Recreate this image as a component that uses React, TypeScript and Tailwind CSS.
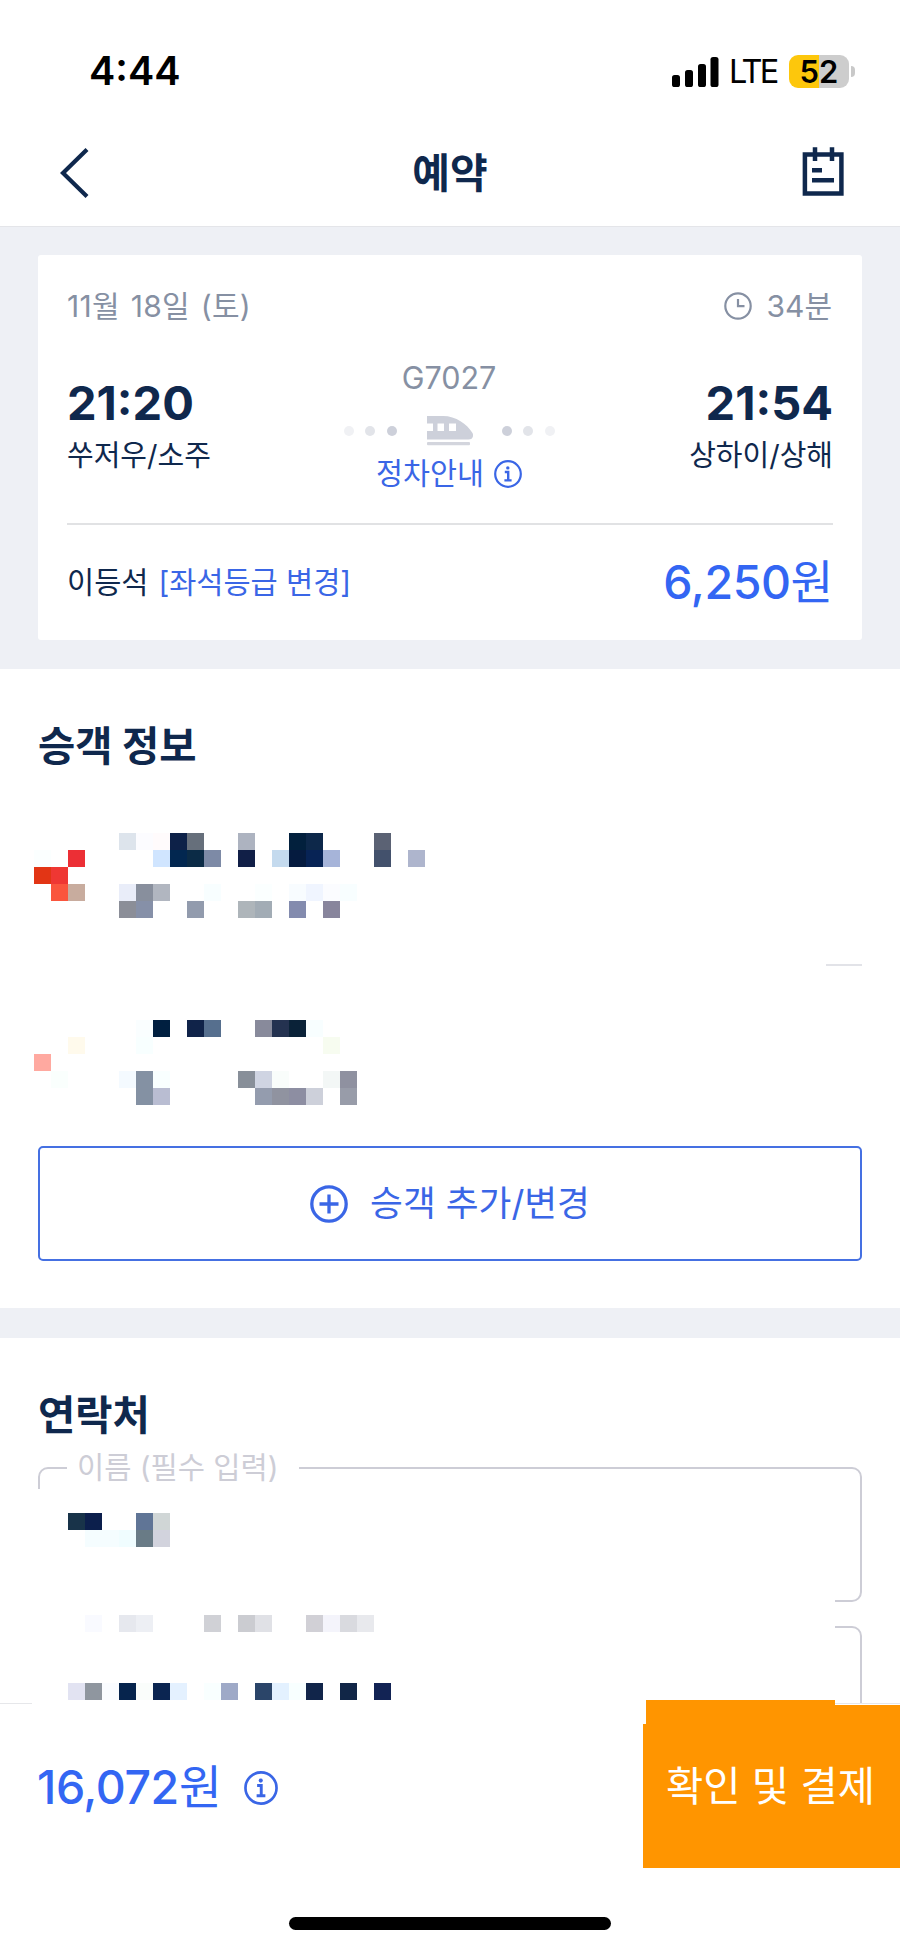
type Cell = [col: number, row: number, color: string]

const CELL = 17

const firstPassenger: Cell[] = [
  [5, 0, "#dde4ec"], [6, 0, "#fcfcff"], [7, 0, "#fffbfc"], [8, 0, "#0d2148"], [9, 0, "#666f7b"],
  [12, 0, "#adb3c0"], [15, 0, "#02203d"], [16, 0, "#0d284a"], [20, 0, "#5b6274"],
  [0, 1, "#fbffff"], [2, 1, "#ec2f35"], [7, 1, "#d0e5ff"], [8, 1, "#022750"], [9, 1, "#0b2b46"],
  [10, 1, "#7d8aa6"], [12, 1, "#111f47"], [14, 1, "#c4daee"], [15, 1, "#051b3f"], [16, 1, "#072355"],
  [17, 1, "#a6b4d9"], [20, 1, "#43516c"], [22, 1, "#aeb5cd"],
  [0, 2, "#e23515"], [1, 2, "#ef3733"],
  [1, 3, "#fa553d"], [2, 3, "#c8ac9e"], [5, 3, "#e9edf9"], [6, 3, "#888f9d"], [7, 3, "#b1b6c0"],
  [10, 3, "#f8feff"], [13, 3, "#fbffff"], [15, 3, "#f8fcff"], [16, 3, "#f0f5ff"], [17, 3, "#fbfcff"], [18, 3, "#f8feff"],
  [5, 4, "#8b8e98"], [6, 4, "#8690a8"], [9, 4, "#929bad"], [12, 4, "#aeb5ba"], [13, 4, "#a2acb5"],
  [15, 4, "#838bae"], [17, 4, "#88859c"],
]

const secondPassenger: Cell[] = [
  [6, 0, "#fafeff"], [7, 0, "#001f40"], [9, 0, "#102349"], [10, 0, "#566f8e"], [13, 0, "#888a9b"],
  [14, 0, "#243250"], [15, 0, "#0a2238"], [16, 0, "#f8feff"],
  [2, 1, "#fffaec"], [6, 1, "#f8ffff"], [17, 1, "#f7fcf0"],
  [0, 2, "#ffa9a0"],
  [1, 3, "#fafffd"], [5, 3, "#f4faff"], [6, 3, "#8491a3"], [7, 3, "#f9ffff"], [12, 3, "#888f99"],
  [13, 3, "#cfd4e2"], [14, 3, "#f9fdfb"], [17, 3, "#f3f7f6"], [18, 3, "#8f91a0"],
  [6, 4, "#8491a3"], [7, 4, "#b9bdd2"], [13, 4, "#949cae"], [14, 4, "#9093a0"], [15, 4, "#8d8ea2"],
  [16, 4, "#cdd0da"], [18, 4, "#989ca9"],
]

const contactCells: Cell[] = [
  [2, 0, "#183349"], [3, 0, "#0c1f4c"], [6, 0, "#607596"], [7, 0, "#d0d6d6"],
  [3, 1, "#f5fdff"], [4, 1, "#f5fdff"], [5, 1, "#f0fdff"], [6, 1, "#697b86"], [7, 1, "#d2d3dd"],
  [3, 6, "#f9faff"], [5, 6, "#e6e8ee"], [6, 6, "#edeff4"], [10, 6, "#d0d1d6"], [12, 6, "#cbccd1"],
  [13, 6, "#e0e1e6"], [16, 6, "#d1d0d6"], [17, 6, "#f4f4fb"], [18, 6, "#d9dadf"], [19, 6, "#e8e9ed"],
  [2, 10, "#e2e3f2"], [3, 10, "#8f969f"], [4, 10, "#fafcff"], [5, 10, "#06244d"], [6, 10, "#fafdfb"],
  [7, 10, "#0b2551"], [8, 10, "#e4f1ff"], [10, 10, "#f9ffff"], [11, 10, "#9ea9c7"], [13, 10, "#2b4569"],
  [14, 10, "#e3f1ff"], [15, 10, "#f8ffff"], [16, 10, "#11254a"], [18, 10, "#112647"], [20, 10, "#122354"],
]

function Mosaic({ cells, rows, className = "" }: { cells: Cell[]; rows: number; className?: string }) {
  return (
    <svg width={23 * CELL} height={rows * CELL} shapeRendering="crispEdges" className={`block ${className}`} aria-hidden="true">
      {cells.map(([col, row, color]) => (
        <rect key={`${col}-${row}`} x={col * CELL} y={row * CELL} width={CELL} height={CELL} fill={color} />
      ))}
    </svg>
  )
}

function InfoIcon({ size }: { size: number }) {
  return (
    <svg width={size} height={size} viewBox="0 0 28 28" fill="none" stroke="#3a66e6" aria-hidden="true">
      <circle cx="14" cy="14" r="12.8" strokeWidth="2.2" />
      <circle cx="13.8" cy="7.9" r="1.7" fill="#3a66e6" stroke="none" />
      <path d="M10.8 12h3.4v8.2M10.4 20.4h7.2" strokeWidth="2.4" />
    </svg>
  )
}

function StatusBar() {
  return (
    <div className="flex h-[120px] items-center justify-between pt-[23px] pr-[45px] pl-[89px] text-black">
      <span className="pt-px text-[39.5px] leading-none font-semibold">4:44</span>
      <div className="flex items-center">
        <svg width="48" height="30" viewBox="0 0 48 30" aria-hidden="true">
          <rect x="0" y="18" width="8" height="12" rx="2.6" />
          <rect x="13" y="13" width="8" height="17" rx="2.6" />
          <rect x="26" y="7" width="8" height="23" rx="2.6" />
          <rect x="38.500" y="0" width="8" height="30" rx="2.6" />
        </svg>
        <span className="ml-[9px] w-[49px] pt-px text-[32.5px] leading-none tracking-[-2.8px]">LTE</span>
        <div className="ml-[11px] flex h-[33px] w-[60px] items-center justify-center rounded-[9px] bg-[linear-gradient(90deg,#fdc70c_50%,#cdcdcd_50%)]">
          <span className="text-[31px] leading-none font-semibold">52</span>
        </div>
        <div className="ml-[2px] h-[11px] w-[4px] rounded-r-full bg-[#c9c9c9]" />
      </div>
    </div>
  )
}

function NavBar() {
  return (
    <header className="flex h-[107px] items-center justify-between border-b border-[#e4e5e9] pr-[56px] pl-[60px]">
      <svg width="42" height="50" viewBox="0 0 42 50" fill="none" stroke="#0f284d" strokeWidth="4.2" aria-hidden="true">
        <path d="M27 1.500 3 25l24 23.500" />
      </svg>
      <h1 className="mr-1 text-[41px] leading-none font-bold">예약</h1>
      <svg width="42" height="50" viewBox="0 0 42 50" fill="none" stroke="#0f284d" strokeWidth="4.5" className="overflow-visible" aria-hidden="true">
        <path d="M2.900 6.500h36.500v38.900h-36.500zM13-.7v13.700M30-.7v13.700M10 22.300h10M10 32.200h22" />
      </svg>
    </header>
  )
}

function TrainIcon() {
  return (
    <svg width="46" height="30" viewBox="0 0 46 30" aria-hidden="true">
      <path
        fill="#cdd0da"
        fillRule="evenodd"
        d="M0 0h16c13 0 24 8 29.500 17 1.500 3 0 6.500-4 6.500H0V15h6V7.500H0zM10.500 7.500V15H17V7.500zM22 7.500V15h7V7.500z"
      />
      <rect y="26" width="43" height="3.200" rx="1" fill="#d3d5dd" />
    </svg>
  )
}

function Dots({ reverse = false }: { reverse?: boolean }) {
  return (
    <div className={`flex gap-[11.5px] ${reverse ? "flex-row-reverse" : ""}`}>
      <i className="size-[10px] rounded-full bg-[#f0f1f4]" />
      <i className="size-[10px] rounded-full bg-[#e2e4e9]" />
      <i className="size-[10px] rounded-full bg-[#cdd0da]" />
    </div>
  )
}

function TicketCard() {
  return (
    <section className="bg-[#eef0f5] pt-7 pr-[38px] pb-[29px] pl-[38px]">
      <div className="h-[385px] rounded-[3px] bg-white px-[29px] pt-[31px]">
        <div className="flex h-10 items-center justify-between pr-px text-[30px] text-[#8690a3]">
          <span className="tracking-[0.3px] [word-spacing:2px]">11월 18일 (토)</span>
          <span className="flex items-center gap-[14px]">
            <svg width="28" height="28" viewBox="0 0 28 28" fill="none" stroke="#8690a3" strokeWidth="2.2" aria-hidden="true">
              <circle cx="14" cy="14" r="12.700" />
              <path d="M14 7v7.200h6.500" />
            </svg>
            34분
          </span>
        </div>

        <div className="grid h-[197px] grid-cols-[1fr_auto_1fr] pt-[26px]">
          <div className="pt-[24px]">
            <div className="text-[47px] leading-[53px] font-bold">21:20</div>
            <div className="text-[29px] leading-[53px]">쑤저우/소주</div>
          </div>
          <div className="mr-[2px] flex flex-col items-center">
            <div className="text-[30.5px] leading-[51px] text-[#8690a3]">G7027</div>
            <div className="flex h-14 items-center">
              <Dots />
              <div className="mr-[29px] ml-[30px]">
                <TrainIcon />
              </div>
              <Dots reverse />
            </div>
            <div className="flex h-[29px] items-center gap-[10px] text-[29.3px] leading-none text-[#3a66e6]">
              정차안내
              <InfoIcon size={28} />
            </div>
          </div>
          <div className="text-right pt-[24px]">
            <div className="text-[47px] leading-[53px] font-bold">21:54</div>
            <div className="text-[29px] leading-[53px]">상하이/상해</div>
          </div>
        </div>

        <div className="flex h-[117px] items-center justify-between border-t-2 border-[#e1e2e4]">
          <div className="flex gap-[10px] text-[29.5px]">
            이등석
            <span className="text-[#3a66e6]">[좌석등급 변경]</span>
          </div>
          <span className="text-[46.5px] font-medium tracking-[-0.4px] text-[#3366f3]">
            6,250<span className="font-normal">원</span>
          </span>
        </div>
      </div>
    </section>
  )
}

function Passengers() {
  return (
    <section className="h-[639px] px-[38px] pt-[51px]">
      <h2 className="text-[40.5px] leading-[54px] font-bold">승객 정보</h2>
      <Mosaic cells={firstPassenger} rows={5} className="mt-[59px] -ml-1" />
      <div className="mt-[46px] ml-auto h-[2px] w-9 bg-[#e2e3e8]" />
      <Mosaic cells={secondPassenger} rows={5} className="mt-[54px] -ml-1" />
      <button className="mt-[41px] flex h-[115px] w-full items-center justify-center gap-[22px] rounded-[5px] border-2 border-[#4570e2] text-[35.7px] text-[#3a66e6]">
        <svg width="38" height="38" viewBox="0 0 38 38" fill="none" stroke="#3a66e6" strokeWidth="3.300" aria-hidden="true">
          <circle cx="19" cy="19" r="17.2" />
          <path d="M19 9.500v19M9.500 19h19" />
        </svg>
        승객 추가/변경
      </button>
    </section>
  )
}

function Contact() {
  return (
    <section className="relative h-[365px] overflow-hidden px-[38px] pt-[51px]">
      <h2 className="text-[40.5px] leading-[54px] font-bold">연락처</h2>
      <div className="relative mt-[24px] h-[135px] rounded-[10px] border-2 border-[#cdcdd6]">
        <span className="absolute -top-[22px] left-[27px] w-[232px] bg-white pl-[10px] text-[29.6px] leading-10 text-[#cdcdd6]">
          이름 (필수 입력)
        </span>
      </div>
      <div className="mt-[24px] h-[120px] rounded-[10px] border-2 border-[#cdcdd6]" />
      <div className="absolute top-[151px] left-8 h-[240px] w-[803px] bg-white pt-6 pl-[2px]">
        <Mosaic cells={contactCells} rows={11} />
      </div>
    </section>
  )
}

function PayBar() {
  return (
    <footer className="relative flex h-[165px] items-center justify-between border-t border-[#e6e7ea] pl-[37px]">
      <div className="absolute -top-px left-8 h-[21px] w-[614px] bg-white" />
      <div className="flex items-center gap-[23px] pt-[3px] text-[46.5px] leading-none font-medium tracking-[-0.4px] text-[#3366f3]">
        <span>
          16,072<span className="font-normal">원</span>
        </span>
        <InfoIcon size={34} />
      </div>
      <button className="mt-px flex h-[163px] w-[257px] items-center justify-center self-start bg-[#ff9500] pr-[2px] pt-[1px] text-[40.5px] text-white">
        확인 및 결제
      </button>
      <div className="absolute -top-[4px] left-[646px] h-2 w-[189px] bg-[#ff9500]" />
      <div className="absolute -top-px left-[640px] h-[21px] w-[6px] bg-white" />
    </footer>
  )
}

export default function App() {
  return (
    <div className="flex h-[1949px] w-[900px] flex-col overflow-hidden bg-white font-['Inter','Noto_Sans_CJK_KR',sans-serif] text-[#0f284d]">
      <StatusBar />
      <NavBar />
      <TicketCard />
      <Passengers />
      <div className="h-[30px] bg-[#eef0f5]" />
      <Contact />
      <PayBar />
      <div className="mx-auto mt-[49px] h-[13px] w-[322px] rounded-full bg-black" />
    </div>
  )
}
